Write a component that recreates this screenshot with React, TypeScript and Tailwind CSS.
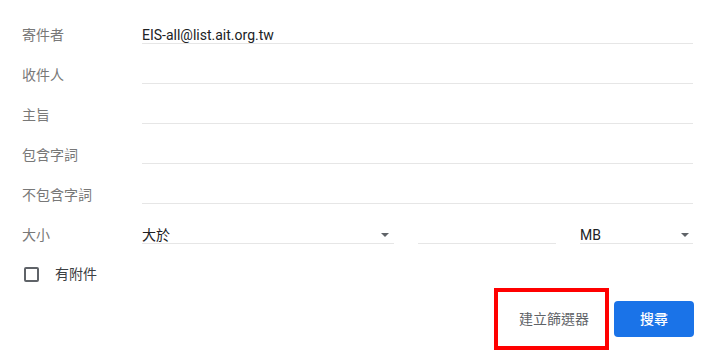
import React from 'react';

const font = { fontFamily: 'Roboto, "Noto Sans CJK TC", sans-serif' };

function Caret() {
  return (
    <svg width="8" height="4" viewBox="0 0 8 4" className="shrink-0">
      <path d="M0 0h8L4 4z" fill="#5f6368" />
    </svg>
  );
}

function FieldRow({ label, value }: { label: string; value?: string }) {
  return (
    <div className="flex h-10 items-end">
      <div className="w-[120px] pb-px leading-4 text-[#787878]">{label}</div>
      <div className="flex-1 border-b border-[#e6e6e6] leading-4 text-[#202124]">
        {value}&nbsp;
      </div>
    </div>
  );
}

export default function App() {
  const rows = [
    { label: '寄件者', value: 'EIS-all@list.ait.org.tw' },
    { label: '收件人' },
    { label: '主旨' },
    { label: '包含字詞' },
    { label: '不包含字詞' },
  ];

  return (
    <div className="h-[359px] w-[715px] bg-white px-[22px] pt-1 text-sm" style={font}>
      {rows.map((r) => (
        <FieldRow key={r.label} label={r.label} value={r.value} />
      ))}

      {/* Size row */}
      <div className="flex h-10 items-end">
        <div className="w-[120px] pb-px leading-4 text-[#787878]">大小</div>
        <div className="flex w-[252px] items-center justify-between border-b border-[#e6e6e6] pr-[5px] leading-4 text-[#202124]">
          <span>大於</span>
          <Caret />
        </div>
        <div className="ml-6 w-[138px] border-b border-[#e6e6e6] leading-4">&nbsp;</div>
        <div className="ml-6 flex flex-1 items-center justify-between border-b border-[#e6e6e6] pr-[4px] leading-4 text-[#202124]">
          <span>MB</span>
          <Caret />
        </div>
      </div>

      {/* Attachment checkbox */}
      <div className="mt-5 flex h-5 items-center">
        <div className="ml-[2px] h-[15px] w-[15px] rounded-[2px] border-2 border-[#5f6368]" />
        <span className="ml-4 text-[#3c4043]">有附件</span>
      </div>

      {/* Actions */}
      <div className="mt-1 flex items-center justify-end">
        <div className="flex h-[62px] w-[115px] items-center justify-center border-4 border-[#ff0000] pl-[5px] text-[#5f6368]">
          建立篩選器
        </div>
        <button className="ml-[5px] mr-[-1px] h-9 w-20 rounded bg-[#1a73e8] font-medium text-white">
          搜尋
        </button>
      </div>
    </div>
  );
}
